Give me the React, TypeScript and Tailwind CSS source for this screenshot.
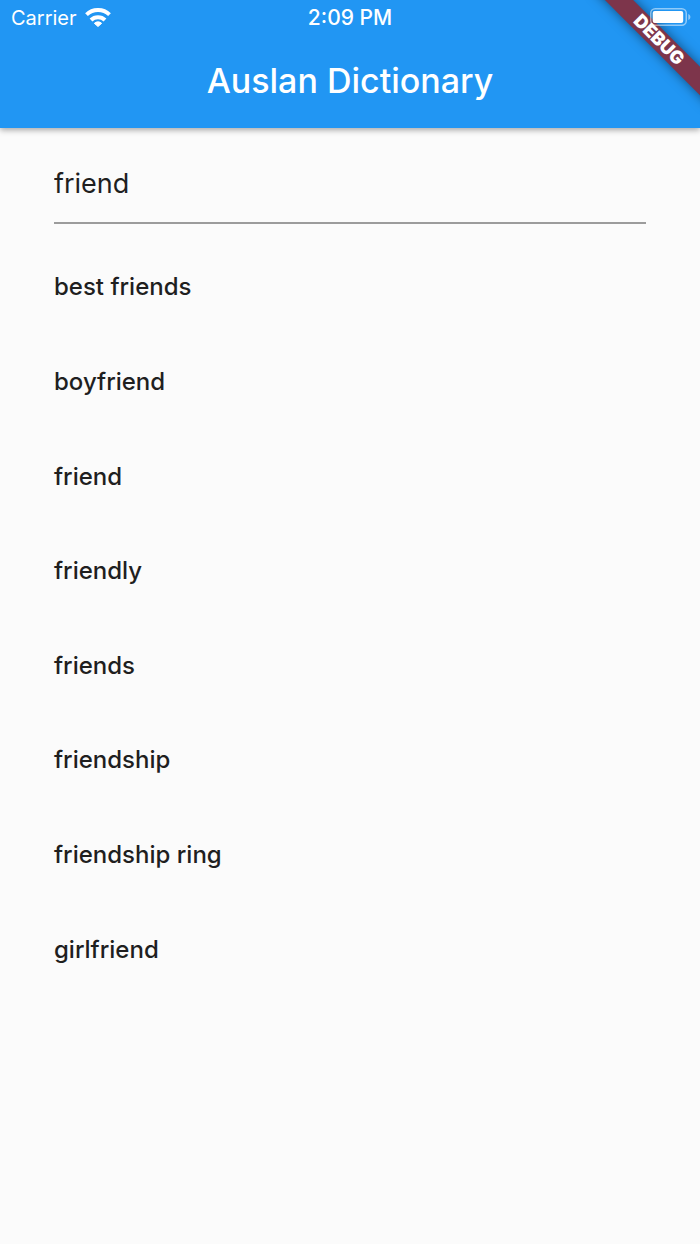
import { useState } from "react";

const words = [
  "best friends",
  "boyfriend",
  "friend",
  "friendly",
  "friends",
  "friendship",
  "friendship ring",
  "girlfriend",
];

function WifiIcon() {
  return (
    <svg viewBox="0 0 78 57" className="mb-[2px] h-[19px] w-[26px]" fill="none" stroke="currentColor" strokeWidth="12" aria-hidden="true">
      <path d="M4.500 19.800A50 50 0 0 1 73.500 19.800" />
      <path d="M18 36A30 30 0 0 1 60 36" />
      <path d="M28 46A16 16 0 0 1 50 46L39 55.500Z" fill="currentColor" strokeWidth="3" strokeLinejoin="round" />
    </svg>
  );
}

function BatteryIcon() {
  return (
    <svg viewBox="0 0 41 18" className="mb-[2px] h-[18px] w-[41px] justify-self-end" aria-hidden="true">
      <rect x=".75" y=".75" width="35.500" height="16.500" rx="4.500" fill="none" stroke="white" strokeOpacity=".5" strokeWidth="1.500" />
      <rect x="2.700" y="3" width="30.500" height="12" rx="2" fill="white" />
      <path d="M38.300 6c2.800 1 2.800 5 0 6z" fill="white" fillOpacity=".5" />
    </svg>
  );
}

function StatusBar() {
  return (
    <div className="relative z-20 grid h-9 grid-cols-3 items-center px-[9px] text-xl">
      <div className="flex items-center gap-2 pl-[2px]">
        <span>Carrier</span>
        <WifiIcon />
      </div>
      <span className="text-center text-[21px] font-medium">2:09 PM</span>
      <BatteryIcon />
    </div>
  );
}

function DebugBanner() {
  return (
    <div className="pointer-events-none absolute top-0 right-0 z-10 size-32 overflow-hidden">
      <div className="absolute top-[30px] right-[-41px] flex h-5 w-[164px] rotate-45 items-center justify-center bg-[#7d354b] text-lg font-black text-white shadow-[0_0_12px_rgba(0,0,0,0.5)]">
        DEBUG
      </div>
    </div>
  );
}

export default function App() {
  const [query, setQuery] = useState("friend");
  return (
    <div className="relative min-h-screen overflow-hidden bg-[#fbfbfb] font-['Inter',sans-serif] text-[#1f1f1f]">
      <header className="bg-[#2196f3] text-white shadow-[0_2px_6px_rgba(0,0,0,0.35)]">
        <StatusBar />
        <h1 className="flex h-[92px] items-center justify-center pb-[3px] text-[34px] font-medium">Auslan Dictionary</h1>
      </header>
      <DebugBanner />
      <main className="px-[54px] pt-6">
        <input
          aria-label="Search"
          value={query}
          onChange={(e) => setQuery(e.target.value)}
          className="h-[72px] w-full border-b-2 border-[#9c9c9c] bg-transparent pb-2 text-[27px] outline-none"
        />
        <ul className="grid min-h-[773px] auto-rows-fr pt-4">
          {words.map((word) => (
            <li key={word} className="flex items-center text-2xl font-medium">{word}</li>
          ))}
        </ul>
      </main>
    </div>
  );
}
